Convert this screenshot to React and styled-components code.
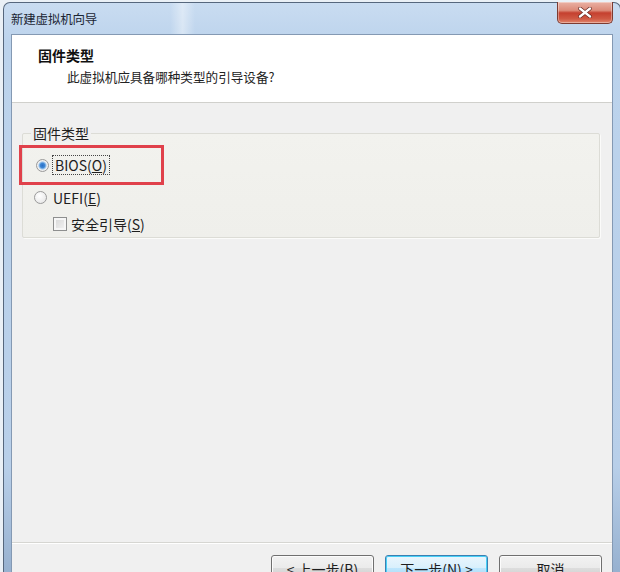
import styled, { createGlobalStyle } from 'styled-components';

const Global = createGlobalStyle`
  html, body {
    margin: 0;
    padding: 0;
    background: #eaf0f6;
    overflow: hidden;
  }
  body {
    font-family: "Noto Sans CJK SC", "Noto Sans", sans-serif;
    color: #1e1e1e;
  }
`

export default function App() {
  return <>
    <Global />
    <Window>
      <TitleBar>
        <Caption>新建虚拟机向导</Caption>
        <CloseButton aria-label='关闭'>
          <svg width='14' height='11' viewBox='0 0 14 11'>
            <path d='M2 1.5 L12 9.5 M12 1.5 L2 9.5' stroke='#5a1d17' strokeWidth='3.6' strokeLinecap='round' />
            <path d='M2 1.5 L12 9.5 M12 1.5 L2 9.5' stroke='#fff' strokeWidth='2.4' strokeLinecap='round' />
          </svg>
        </CloseButton>
      </TitleBar>
      <Client>
        <Header>
          <HeaderTitle>固件类型</HeaderTitle>
          <HeaderText>此虚拟机应具备哪种类型的引导设备?</HeaderText>
        </Header>
        <Body>
          <GroupBox>
            <GroupLabel>固件类型</GroupLabel>
            <Option highlighted>
              <Radio checked />
              <FocusText>BIOS(<u>O</u>)</FocusText>
            </Option>
            <Option>
              <Radio />
              <OptionText>UEFI(<u>E</u>)</OptionText>
            </Option>
            <Option indent>
              <CheckBox />
              <OptionText>安全引导(<u>S</u>)</OptionText>
            </Option>
          </GroupBox>
        </Body>
        <Footer>
          <Button>&lt; 上一步(B)</Button>
          <Button focused>下一步(N) &gt;</Button>
          <Button>取消</Button>
        </Footer>
      </Client>
    </Window>
  </>
}

const Window = styled.div`
  box-sizing: border-box;
  width: 618px;
  height: 580px;
  margin: 2px 0 0 3px;
  display: flex;
  flex-direction: column;
  border: 1px solid #56677d;
  border-bottom: none;
  border-radius: 7px 7px 0 0;
  padding: 0 7px;
  background:
    linear-gradient(90deg, rgba(255,255,255,0) 0, rgba(255,255,255,0) 27%, rgba(255,255,255,.4) 29%, rgba(255,255,255,0) 31%, rgba(255,255,255,0) 100%),
    linear-gradient(180deg, #c9dcf1 0, #bcd3ec 40px, #b8cfe9 80%, #94aecd 100%);
`
const TitleBar = styled.div`
  height: 31px;
  display: flex;
  align-items: flex-start;
`
const Caption = styled.div`
  font-size: 12.5px;
  line-height: 12px;
  margin-top: 10px;
  color: #1b2533;
  letter-spacing: -0.2px;
`
const CloseButton = styled.div`
  margin-left: auto;
  margin-top: -1px;
  width: 56px;
  height: 22px;
  box-sizing: border-box;
  display: flex;
  align-items: center;
  justify-content: center;
  border: 1px solid #7d3b31;
  border-top: none;
  border-radius: 0 0 5px 5px;
  background: linear-gradient(180deg, #eab1a4 0, #dc8a78 40%, #c5402f 52%, #cf5a44 80%, #e1866d 100%);
  box-shadow: inset 0 0 0 1px rgba(255,255,255,.35);
`
const Client = styled.div`
  flex: 1;
  display: flex;
  flex-direction: column;
  border: 1px solid #8499b3;
  border-bottom: none;
  background: #f0f0f0;
`
const Header = styled.div`
  height: 68px;
  box-sizing: border-box;
  background: #fff;
  border-bottom: 1px solid #d0d0cc;
  padding: 10px 0 0 26px;
`
const HeaderTitle = styled.div`
  font-size: 14px;
  font-weight: 700;
  line-height: 20px;
  color: #111;
`
const HeaderText = styled.div`
  font-size: 12.6px;
  line-height: 18px;
  margin-top: 3px;
  padding-left: 29px;
  color: #222;
`
const Body = styled.div`
  flex: 1;
  padding: 30px 12px 0 10px;
`
const GroupBox = styled.div`
  position: relative;
  height: 105px;
  box-sizing: border-box;
  border: 1px solid #dcdcd6;
  border-radius: 2px;
  background: linear-gradient(180deg, #f2f2ee 0, #efefeb 100%);
  box-shadow: 1px 1px 0 #fbfbfa;
  padding: 22px 0 0 11px;
  display: flex;
  flex-direction: column;
`
const GroupLabel = styled.div`
  position: absolute;
  top: -10px;
  left: 8px;
  padding: 0 2px;
  font-size: 14px;
  line-height: 18px;
  color: #1e1e1e;
  background: #f0f0f0;
`
const Option = styled.div`
  display: flex;
  align-items: center;
  gap: ${p => p.indent ? '4px' : '6px'};
  height: 29px;
  margin-left: ${p => p.indent ? '19px' : '0'};
  ${p => p.highlighted ? `
    box-sizing: border-box;
    height: 44px;
    margin: -11px 0 -1px -15px;
    padding-left: 14px;
    border: 3px solid #e0414b;
    width: 145px;
  ` : ''}
`
const Radio = styled.span`
  width: 13px;
  height: 13px;
  box-sizing: border-box;
  border-radius: 50%;
  border: 1px solid #9a9a9a;
  background: ${p => p.checked
    ? 'radial-gradient(circle, #2a6ec7 0, #3d86d4 2.2px, #9fc6ec 3.6px, #f3f3f3 4.6px, #dadada 100%)'
    : 'radial-gradient(circle at 40% 35%, #ffffff 0, #e2e2e2 100%)'};
  flex-shrink: 0;
`
const CheckBox = styled.span`
  width: 14px;
  height: 14px;
  box-sizing: border-box;
  border: 1px solid #8e8f8f;
  background: linear-gradient(135deg, #d6d6d6 0, #f4f4f4 100%);
  box-shadow: inset 0 0 0 2px #f6f6f6;
  flex-shrink: 0;
`
const OptionText = styled.span`
  font-size: 14px;
  line-height: 18px;
  color: #1e1e1e;
`
const FocusText = styled(OptionText)`
  outline: 1px dotted #444;
  padding: 0 2px;
  margin-left: -2px;
`
const Footer = styled.div`
  box-sizing: border-box;
  height: 40px;
  border-top: 1px solid #d6d6d2;
  box-shadow: inset 0 1px 0 #fff;
  display: flex;
  justify-content: flex-end;
  align-items: flex-start;
  gap: 11px;
  padding: 12px 10px 0 0;
`
const Button = styled.div`
  width: 103px;
  height: 25px;
  box-sizing: border-box;
  border: 1px solid ${p => p.focused ? '#3c7fb1' : '#707070'};
  border-radius: 3px;
  background: ${p => p.focused
    ? 'linear-gradient(180deg, #eaf6fd 0, #d9f0fc 50%, #bee6fd 51%, #a7d9f5 100%)'
    : 'linear-gradient(180deg, #f2f2f2 0, #ebebeb 50%, #dddddd 51%, #cfcfcf 100%)'};
  box-shadow: inset 0 0 0 1px ${p => p.focused ? '#48d0f7' : '#fcfcfc'};
  font-size: 14px;
  line-height: 23px;
  text-align: center;
  color: #1e1e1e;
  padding-top: 2px;
`
